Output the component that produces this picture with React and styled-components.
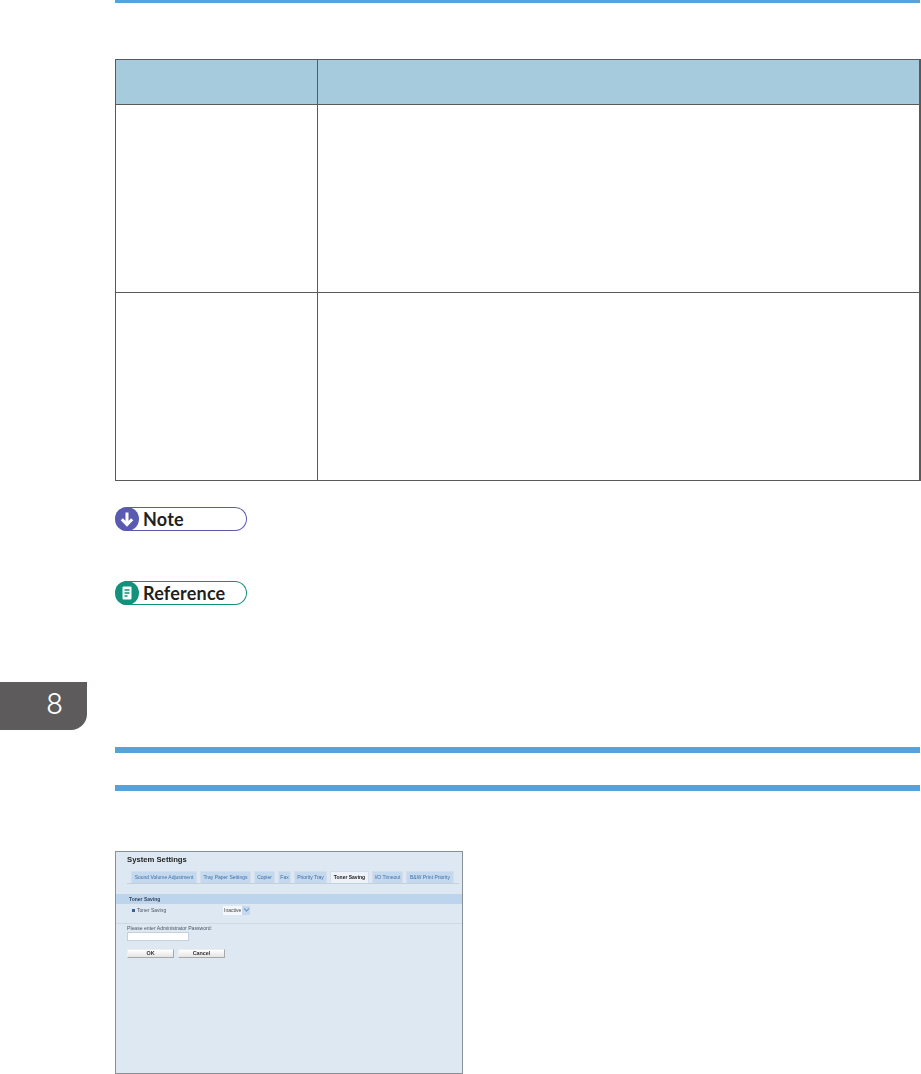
import styled, { createGlobalStyle } from 'styled-components'

const GlobalStyle = createGlobalStyle`
  html, body {
    margin: 0;
    padding: 0;
    background: #ffffff;
  }
  body {
    font-family: "Liberation Sans", Arial, sans-serif;
  }
`

const TABS = [
  { label: 'Sound Volume Adjustment', width: 66 },
  { label: 'Tray Paper Settings', width: 51 },
  { label: 'Copier', width: 21 },
  { label: 'Fax', width: 13 },
  { label: 'Priority Tray', width: 33 },
  { label: 'Toner Saving', width: 39, active: true },
  { label: 'I/O Timeout', width: 31 },
  { label: 'B&W Print Priority', width: 48 }
]

function ArrowDownIcon () {
  return (
    <svg width="24" height="24" viewBox="0 0 24 24">
      <circle cx="12" cy="12" r="12" fill="#5a5ab0" />
      <path d="M12 5.5v12M6.8 12.2l5.2 5.3 5.2-5.3" fill="none" stroke="#fff" strokeWidth="3" />
    </svg>
  )
}

function PageIcon () {
  return (
    <svg width="24" height="24" viewBox="0 0 24 24">
      <circle cx="12" cy="12" r="12" fill="#12917c" />
      <rect x="7.5" y="5.5" width="9" height="13" rx="1" fill="#fff" />
      <path d="M9.5 9h5M9.5 12h5M9.5 15h3" stroke="#12917c" strokeWidth="1.3" />
    </svg>
  )
}

export default function App () {
  return (
    <Page>
      <GlobalStyle />
      <Gutter>
        <ChapterTab>8</ChapterTab>
      </Gutter>
      <Main>
        <TopRule />
        <Table>
          <HeadCell />
          <HeadCell $last />
          <BodyCell />
          <BodyCell $last />
          <BodyCell />
          <BodyCell $last />
        </Table>
        <NotePill $color="#5a5ab0" $gap={26}>
          <ArrowDownIcon />
          <PillLabel>Note</PillLabel>
        </NotePill>
        <NotePill $color="#12917c" $gap={50}>
          <PageIcon />
          <PillLabel>Reference</PillLabel>
        </NotePill>
        <SectionRule $gap={142} />
        <SectionRule $gap={32} />
        <Shot>
          <ShotTitle>System Settings</ShotTitle>
          <ShotTabs>
            {TABS.map((tab) => (
              <ShotTab key={tab.label} $width={tab.width} $active={tab.active}>
                {tab.label}
              </ShotTab>
            ))}
          </ShotTabs>
          <ShotBand>Toner Saving</ShotBand>
          <ShotRow>
            <ShotBullet />
            <ShotRowLabel>Toner Saving</ShotRowLabel>
            <ShotSelect>
              Inactive
              <ShotSelectArrow>
                <svg width="7" height="6" viewBox="0 0 7 6">
                  <path d="M1 1.5l2.5 2.5L6 1.5" fill="none" stroke="#7a9dcb" strokeWidth="1.3" />
                </svg>
              </ShotSelectArrow>
            </ShotSelect>
          </ShotRow>
          <ShotDivider />
          <ShotPrompt>Please enter Administrator Password:</ShotPrompt>
          <ShotInput />
          <ShotButtons>
            <ShotButton>OK</ShotButton>
            <ShotButton>Cancel</ShotButton>
          </ShotButtons>
        </Shot>
      </Main>
    </Page>
  )
}

const Page = styled.div`
  display: flex;
  width: 921px;
  height: 1074px;
  overflow: hidden;
  background: #ffffff;
`

const Gutter = styled.div`
  width: 115px;
  flex: none;
  padding-top: 682px;
`

const ChapterTab = styled.div`
  width: 87px;
  height: 48px;
  box-sizing: border-box;
  padding: 4px 24px 0 0;
  text-align: right;
  background: #5d5b5b;
  border-bottom-right-radius: 16px;
  color: #ffffff;
  font-family: Inter, sans-serif;
  font-weight: 300;
  font-size: 28px;
  line-height: 36px;
`

const Main = styled.div`
  flex: 1;
  display: flex;
  flex-direction: column;
  align-items: flex-start;
`

const TopRule = styled.div`
  width: 805px;
  height: 3px;
  background: #55a2dd;
`

const Table = styled.div`
  display: grid;
  grid-template-columns: 202px 603px;
  grid-template-rows: 45px 188px 188px;
  width: 806px;
  box-sizing: border-box;
  margin-top: 56px;
  border-top: 1px solid #595959;
  border-left: 1px solid #595959;
`

const HeadCell = styled.div`
  background: #a6cbdd;
  border-bottom: 1px solid #595959;
  border-right: 1px solid #595959;
  ${(p) => (p.$last ? 'border-right-width: 2px;' : '')}
`

const BodyCell = styled.div`
  border-bottom: 1px solid #595959;
  border-right: 1px solid #595959;
  ${(p) => (p.$last ? 'border-right-width: 2px;' : '')}
`

const NotePill = styled.div`
  display: flex;
  align-items: center;
  gap: 4px;
  width: 132px;
  height: 24px;
  box-sizing: border-box;
  margin-top: ${(p) => p.$gap}px;
  border: 1px solid ${(p) => p.$color};
  border-left: none;
  border-radius: 12px;

  svg {
    flex: none;
  }
`

const PillLabel = styled.span`
  color: #231f20;
  font-family: Lato, sans-serif;
  font-weight: 700;
  font-size: 18px;
  letter-spacing: 0.2px;
  line-height: 22px;
`

const SectionRule = styled.div`
  width: 805px;
  height: 6px;
  margin-top: ${(p) => p.$gap}px;
  background: #55a2dd;
`

const Shot = styled.div`
  width: 348px;
  height: 223px;
  flex: none;
  margin-top: 60px;
  box-sizing: border-box;
  padding-top: 3px;
  background: #dde8f2;
  border: 1px solid #8a9098;
  overflow: hidden;

  > * {
    filter: blur(0.3px);
  }
`

const ShotTitle = styled.div`
  margin-left: 11px;
  color: #222222;
  font-weight: 700;
  font-size: 7.7px;
  line-height: 10px;
`

const ShotTabs = styled.div`
  display: flex;
  gap: 3px;
  height: 12px;
  margin: 6px 3px 0 11px;
  padding-left: 4px;
  border-bottom: 1px solid #c3d0dc;
`

const ShotTab = styled.div`
  width: ${(p) => p.$width}px;
  height: 12px;
  flex: none;
  box-sizing: border-box;
  background: ${(p) => (p.$active ? '#ecf2f8' : '#c5d9ee')};
  border: 1px solid #d3deea;
  border-bottom: none;
  color: ${(p) => (p.$active ? '#222222' : '#3d6da8')};
  font-size: 5px;
  font-weight: ${(p) => (p.$active ? 700 : 400)};
  line-height: 11px;
  text-align: center;
  white-space: nowrap;
`

const ShotBand = styled.div`
  height: 10px;
  margin-top: 10px;
  padding-left: 13px;
  background: #bcd5ec;
  color: #33475c;
  font-size: 5px;
  font-weight: 700;
  line-height: 10px;
`

const ShotRow = styled.div`
  display: flex;
  align-items: center;
  height: 10px;
  margin-top: 1px;
  padding-left: 16px;
`

const ShotBullet = styled.span`
  width: 3px;
  height: 3px;
  background: #3d5f94;
`

const ShotRowLabel = styled.span`
  width: 86px;
  margin-left: 2px;
  color: #4a5563;
  font-size: 5px;
`

const ShotSelect = styled.div`
  display: flex;
  align-items: center;
  justify-content: space-between;
  width: 27px;
  height: 9px;
  box-sizing: border-box;
  padding-left: 1px;
  background: #f4f7fb;
  color: #444444;
  font-size: 5px;
`

const ShotSelectArrow = styled.span`
  display: flex;
  align-items: center;
  justify-content: center;
  width: 8px;
  height: 9px;
  background: #c5d9ee;
`

const ShotDivider = styled.div`
  height: 1px;
  margin-top: 8px;
  background: #cdd9e3;
`

const ShotPrompt = styled.div`
  margin: 1px 0 0 11px;
  color: #4a5563;
  font-size: 5.1px;
  line-height: 6px;
`

const ShotInput = styled.div`
  width: 62px;
  height: 9px;
  box-sizing: border-box;
  margin: 1px 0 0 11px;
  background: #ffffff;
  border: 1px solid #c4d0dc;
`

const ShotButtons = styled.div`
  display: flex;
  gap: 4px;
  margin: 8px 0 0 11px;
`

const ShotButton = styled.div`
  width: 47px;
  height: 9px;
  box-sizing: border-box;
  background: linear-gradient(#ffffff, #e4e4e4);
  border: 1px solid #a8a8a8;
  border-left-color: #eeeeee;
  border-top-color: #eeeeee;
  color: #333333;
  font-size: 5.4px;
  font-weight: 700;
  line-height: 7px;
  text-align: center;
`
